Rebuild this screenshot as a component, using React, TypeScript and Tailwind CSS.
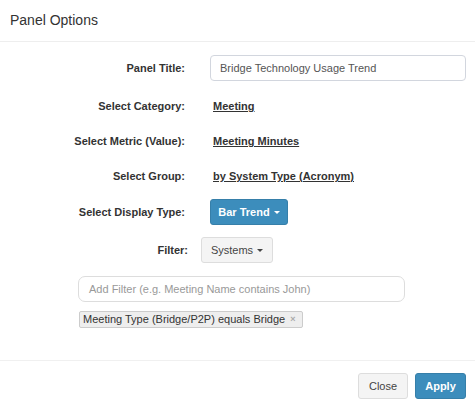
import React from "react";

function Caret() {
  return (
    <span className="inline-block w-0 h-0 ml-[4px] border-t-[3px] border-x-[3px] border-x-transparent border-t-current align-middle" />
  );
}

function Row({
  label,
  children,
  className,
}: {
  label: string;
  children: React.ReactNode;
  className: string;
}) {
  return (
    <div className={`flex items-center ${className}`}>
      <div className="w-[185px] text-right font-bold text-[11px] text-[#333]">{label}</div>
      <div className="ml-[25px] flex items-center">{children}</div>
    </div>
  );
}

export default function App() {
  return (
    <div
      className="w-[475px] h-[411px] bg-white text-[#333] flex flex-col"
      style={{ fontFamily: '"Liberation Sans", Arial, sans-serif' }}
    >
      <div className="h-[42px] border-b border-[#eeeeee] flex items-center px-[10px] text-[14px] text-[#333]">
        Panel Options
      </div>
      <div className="flex-1 flex flex-col">
        <Row label="Panel Title:" className="mt-[13px] h-[26px]">
          <div className="w-[256px] h-[26px] border border-[#d2d6de] rounded-[4px] flex items-center pl-[9px] text-[11px] text-[#555]">
            Bridge Technology Usage Trend
          </div>
        </Row>
        <Row label="Select Category:" className="mt-[13px] h-[25px]">
          <span className="pl-[3px] font-bold text-[11px] underline text-[#333]">Meeting</span>
        </Row>
        <Row label="Select Metric (Value):" className="mt-[10px] h-[25px]">
          <span className="pl-[3px] font-bold text-[11px] underline text-[#333]">Meeting Minutes</span>
        </Row>
        <Row label="Select Group:" className="mt-[10px] h-[25px]">
          <span className="pl-[3px] font-bold text-[11px] underline text-[#333]">by System Type (Acronym)</span>
        </Row>
        <Row label="Select Display Type:" className="mt-[10px] h-[26px]">
          <div className="w-[78px] h-[26px] rounded-[3px] bg-[#3c8dbc] border border-[#367fa9] text-white font-bold text-[11px] flex items-center justify-center">
            Bar Trend
            <Caret />
          </div>
        </Row>
        <div className="flex items-center mt-[12px] h-[26px]">
          <div className="w-[188px] text-right font-bold text-[11px] text-[#333]">Filter:</div>
          <div className="ml-[13px] w-[72px] h-[26px] rounded-[3px] bg-[#f4f4f4] border border-[#dddddd] text-[#444] text-[11px] flex items-center justify-center">
            Systems
            <Caret />
          </div>
        </div>
        <div className="ml-[78px] mt-[13px] w-[327px] h-[26px] border border-[#dddddd] rounded-[7px] flex items-center pl-[10px] text-[11px] text-[#999]">
          Add Filter (e.g. Meeting Name contains John)
        </div>
        <div className="ml-[79px] mt-[9px] w-[224px] h-[17px] bg-[#eeeeee] border border-[#cccccc] rounded-[2px] flex items-center pl-[3px] text-[11px] text-[#333]">
          <span>Meeting Type (Bridge/P2P) equals Bridge</span>
          <span className="ml-[5px] text-[9px] text-[#aaa] font-bold">×</span>
        </div>
      </div>
      <div className="h-[51px] border-t border-[#f0f0f0] flex items-start justify-end pt-[12px] pr-[9px] gap-[7px]">
        <div className="w-[50px] h-[26px] rounded-[3px] bg-[#f4f4f4] border border-[#dddddd] text-[#444] text-[11px] flex items-center justify-center">
          Close
        </div>
        <div className="w-[51px] h-[26px] rounded-[3px] bg-[#3c8dbc] border border-[#367fa9] text-white font-bold text-[11px] flex items-center justify-center">
          Apply
        </div>
      </div>
    </div>
  );
}
